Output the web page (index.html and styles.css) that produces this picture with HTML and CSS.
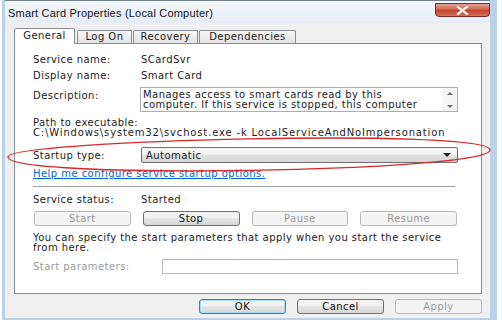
FILE: index.html
```html
<!DOCTYPE html>
<html lang="en">
  <head>
    <meta charset="UTF-8" />
    <title>Smart Card Properties (Local Computer)</title>
    <link rel="stylesheet" href="styles.css">
  </head>
  <body>
    <div class="window">
      <div class="titlebar">
        <span class="title">Smart Card Properties (Local Computer)</span>
        <button class="close" aria-label="Close">
          <svg width="13" height="9" viewBox="0 0 13 9">
            <path d="M2 1 L11 8 M11 1 L2 8" stroke="#fff" stroke-width="2.2" stroke-linecap="square"/>
          </svg>
        </button>
      </div>

      <div class="dialog">
        <!-- tab strip -->
        <div class="tabs">
          <div class="tab active" style="width: 59px">General</div>
          <div class="tab" style="width: 53px">Log On</div>
          <div class="tab" style="width: 63px">Recovery</div>
          <div class="tab" style="width: 95px">Dependencies</div>
        </div>

        <div class="panel">
          <div class="row row-info">
            <span class="label">Service name:</span>
            <span>SCardSvr</span>
          </div>
          <div class="row row-info">
            <span class="label">Display name:</span>
            <span>Smart Card</span>
          </div>
          <div class="row row-desc">
            <span class="label">Description:</span>
            <div class="desc-box">
              <div class="desc-text">Manages access to smart cards read by this<br>computer. If this service is stopped, this computer</div>
              <div class="scroll">
                <span class="arrow-up"></span>
                <span class="arrow-down"></span>
              </div>
            </div>
          </div>

          <div class="path-label">Path to executable:</div>
          <div class="path">C:\Windows\system32\svchost.exe -k LocalServiceAndNoImpersonation</div>

          <div class="row row-startup">
            <span class="label">Startup type:</span>
            <div class="select">
              <span>Automatic</span>
              <span class="arrow-down dark"></span>
            </div>
          </div>

          <a class="help-link" href="#">Help me configure service startup options.</a>
          <div class="separator"></div>

          <div class="row row-info row-status">
            <span class="label">Service status:</span>
            <span>Started</span>
          </div>

          <div class="service-buttons">
            <button class="btn" disabled>Start</button>
            <button class="btn">Stop</button>
            <button class="btn" disabled>Pause</button>
            <button class="btn" disabled>Resume</button>
          </div>

          <p class="hint">You can specify the start parameters that apply when you start the service from here.</p>

          <div class="row row-params">
            <span class="label disabled-text">Start parameters:</span>
            <div class="param-input"></div>
          </div>
        </div>

        <div class="actions">
          <button class="btn btn-default">OK</button>
          <button class="btn">Cancel</button>
          <button class="btn" disabled>Apply</button>
        </div>
      </div>

      <!-- red marker round the startup type row -->
      <svg class="marker" width="502" height="190" viewBox="0 0 502 190">
        <path d="M8 157 C 8 140, 490 128, 490 150 C 490 172, 8 180, 8 157 Z" fill="none" stroke="#d8262a" stroke-width="1.4"/>
      </svg>
    </div>
  </body>
</html>
```

FILE: styles.css
```css
:root {
  --frame: #b9d1ea;
  --face: #f0f0f0;
  --tab-border: #898c95;
  --btn-border: #707070;
  --disabled: #9a9a9a;
  --link: #0066cc;
}

body {
  margin: 0;
  background: #fff;
  font-family: "DejaVu Sans", Verdana, sans-serif;
  font-size: 10px;
  color: #1b1b1b;
}

.window {
  position: relative;
  margin-left: 2px;
  width: 485px;
  border-left: 3px solid var(--frame);
  border-right: 7px solid var(--frame);
  border-bottom: 2px solid var(--frame);
  background: var(--face);
}

/* title bar */
.titlebar {
  display: flex;
  justify-content: space-between;
  align-items: flex-start;
  height: 23px;
  background: linear-gradient(#f4f8fc, #e4edf7);
  border-top: 1px solid #6f7f92;
  box-sizing: border-box;
}

.title {
  font-family: "Liberation Sans", Arial, sans-serif;
  font-size: 11px;
  letter-spacing: 0.2px;
  color: #111;
  padding: 6px 0 0 3px;
}

.close {
  display: flex;
  align-items: center;
  justify-content: center;
  width: 55px;
  height: 14px;
  margin-top: 2px;
  padding: 0;
  border: 1px solid #7a2a22;
  border-radius: 0 0 4px 4px;
  background: linear-gradient(#e5a497, #d0654f 45%, #c2412a 50%, #d4705b);
}

/* dialog face */
.dialog {
  padding: 5px 8px 4px 9px;
  height: 295px;
  box-sizing: border-box;
  letter-spacing: 0.45px;
}

.tabs {
  display: flex;
  align-items: flex-end;
  height: 15px;
  position: relative;
  z-index: 1;
}

.tab {
  height: 12px;
  line-height: 12px;
  margin-left: 1px;
  border: 1px solid var(--tab-border);
  border-bottom: none;
  border-radius: 2px 2px 0 0;
  background: linear-gradient(#f7f7f7, #e3e3e3);
  text-align: center;
}

.tab.active {
  height: 15px;
  line-height: 14px;
  margin-left: 0;
  margin-right: 1px;
  margin-bottom: -1px;
  background: #fff;
}

.panel {
  height: 251px;
  box-sizing: border-box;
  padding: 7px 23px 0 18px;
  background: #fff;
  border: 1px solid var(--tab-border);
}

.row {
  display: flex;
  align-items: center;
}

.label {
  flex: none;
  width: 108px;
}

.row-info {
  height: 16px;
}

.row-desc {
  align-items: flex-start;
  margin-top: 4px;
}

.row-desc .label {
  width: 107px;
  line-height: 16px;
  margin-top: 1px;
}

.desc-box {
  flex: 1;
  display: flex;
  height: 25px;
  box-sizing: border-box;
  border: 1px solid #abadb3;
}

.desc-text {
  flex: 1;
  line-height: 9.5px;
  padding: 2px 0 0 2px;
  white-space: nowrap;
  overflow: hidden;
}

.scroll {
  width: 15px;
  display: flex;
  flex-direction: column;
  justify-content: space-between;
  align-items: center;
  padding: 4px 0 3px;
  background: #f5f5f5;
}

.arrow-up,
.arrow-down {
  width: 0;
  height: 0;
  border-left: 3px solid transparent;
  border-right: 3px solid transparent;
}

.arrow-up {
  border-bottom: 3px solid #6d6d6d;
}

.arrow-down {
  border-top: 3px solid #6d6d6d;
}

.arrow-down.dark {
  border-left-width: 4px;
  border-right-width: 4px;
  border-top: 4px solid #222;
}

.path-label {
  margin-top: 6px;
  line-height: 10px;
}

.path {
  line-height: 10px;
  white-space: nowrap;
  letter-spacing: 0.85px;
}

.row-startup {
  margin-top: 9px;
}

.select {
  flex: 1;
  display: flex;
  justify-content: space-between;
  align-items: center;
  height: 16px;
  box-sizing: border-box;
  padding: 0 6px 0 4px;
  border: 1px solid var(--btn-border);
  border-radius: 2px;
  background: linear-gradient(#f5f5f5 45%, #e2e2e2 50%, #d7d7d7);
}

.help-link {
  display: block;
  margin-top: 6px;
  line-height: 10px;
  color: var(--link);
}

.separator {
  margin: 7px 3px 0 0;
  height: 1px;
  background: #a0a0a0;
}

.row-status {
  margin-top: 4px;
}

.service-buttons {
  display: grid;
  grid-template-columns: repeat(4, 1fr);
  gap: 12px;
  margin: 4px 1px 0 1px;
}

.btn {
  height: 15px;
  padding: 0;
  font: inherit;
  letter-spacing: inherit;
  color: #111;
  border: 1px solid var(--btn-border);
  border-radius: 3px;
  background: linear-gradient(#f2f2f2 45%, #e6e6e6 50%, #d6d6d6);
}

.btn:disabled {
  color: var(--disabled);
  border-color: #b5b9bc;
  background: #f4f4f4;
}

.hint {
  margin: 7px 0 0;
  line-height: 10px;
}

.row-params {
  margin-top: 6px;
}

.row-params .label {
  width: 129px;
}

.disabled-text {
  color: var(--disabled);
}

.param-input {
  flex: 1;
  height: 15px;
  box-sizing: border-box;
  border: 1px solid #b5b9bc;
}

.actions {
  display: flex;
  justify-content: flex-end;
  gap: 11px;
  margin-top: 5px;
}

.actions .btn {
  width: 87px;
}

.btn-default {
  border-color: #3c7fb1;
  box-shadow: inset 0 0 0 1px #a6d9f4;
}

/* hand-drawn marker over the dialog */
.marker {
  position: absolute;
  left: -5px;
  top: 0;
  pointer-events: none;
}
```
